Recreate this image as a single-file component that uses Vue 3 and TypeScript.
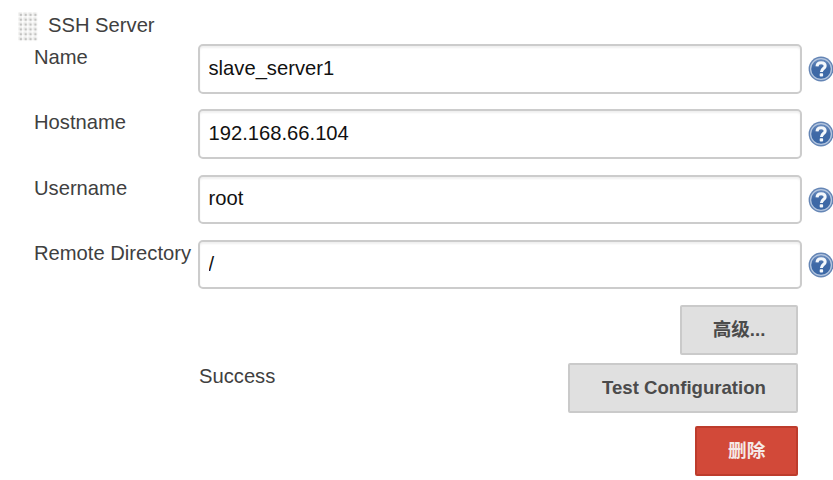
<script setup lang="ts">
import { reactive } from 'vue'

interface Field {
  id: string
  label: string
  value: string
}

const fields = reactive<Field[]>([
  { id: 'name', label: 'Name', value: 'slave_server1' },
  { id: 'hostname', label: 'Hostname', value: '192.168.66.104' },
  { id: 'username', label: 'Username', value: 'root' },
  { id: 'directory', label: 'Remote Directory', value: '/' },
])
</script>

<template>
  <main class="panel">
    <header class="heading">
      <svg class="handle" width="20" height="30" viewBox="0 0 20 30">
        <defs>
          <pattern id="grip" width="4.85" height="4.85" patternUnits="userSpaceOnUse">
            <rect x="0.4" y="0.4" width="3.7" height="3.7" fill="#e9e9e8" />
            <rect x="1.9" y="1.9" width="2.1" height="2.1" fill="#c2c2c0" />
          </pattern>
        </defs>
        <rect width="19.4" height="29.1" fill="url(#grip)" />
      </svg>
      <span>SSH Server</span>
    </header>

    <div v-for="field in fields" :key="field.id" class="row">
      <label class="label" :for="field.id">{{ field.label }}</label>
      <input :id="field.id" v-model="field.value" class="input" type="text" spellcheck="false" />
      <svg class="help" width="26" height="26" viewBox="0 0 26 26">
        <defs>
          <linearGradient :id="`shade-${field.id}`" x1="0" y1="0" x2="0" y2="1">
            <stop offset="0" stop-color="#6f90c0" />
            <stop offset="0.45" stop-color="#3f69a6" />
            <stop offset="1" stop-color="#3b68a6" />
          </linearGradient>
        </defs>
        <circle cx="13" cy="13" r="12.4" fill="#6485b5" />
        <circle cx="13" cy="13" r="10.4" :fill="`url(#shade-${field.id})`" stroke="#b4c6df" stroke-width="1.3" />
        <path d="M9 10.4C9.2 7.7 10.8 6.7 13.1 6.7C15.7 6.7 17.2 7.9 17.2 9.9C17.2 12.5 13.4 12.6 13.4 15.9" fill="none" stroke="#f4f8fc" stroke-width="3" />
        <rect x="11.7" y="17.3" width="3.4" height="3.2" rx="0.8" fill="#f4f8fc" />
      </svg>
    </div>

    <div class="actions">
      <button class="button advanced" type="button">高级...</button>
    </div>
    <div class="actions test-row">
      <span class="status">Success</span>
      <button class="button test" type="button">Test Configuration</button>
    </div>
    <div class="actions delete-row">
      <button class="button danger" type="button">删除</button>
    </div>
  </main>
</template>

<style>
body {
  margin: 0;
  background: #fff;
  overflow: hidden;
}
</style>

<style scoped>
.panel {
  box-sizing: border-box;
  width: 833px;
  height: 480px;
  padding-top: 12px;
  overflow: hidden;
  color: #404040;
  font: 20.2px/24px "Liberation Sans", "Noto Sans CJK SC", sans-serif;
}

.heading {
  display: flex;
  gap: 10px;
  height: 32.2px;
  padding-left: 18px;
}

.heading span {
  padding-top: 1px;
}

.handle {
  flex: none;
}

.row {
  display: grid;
  grid-template-columns: 163.5px 604.5px 26px;
  height: 65.2px;
  padding-left: 34px;
}

.label {
  padding-top: 1px;
  white-space: nowrap;
}

.input {
  box-sizing: border-box;
  width: 604.5px;
  height: 49.6px;
  padding: 0 9px 1px;
  border: 2px solid #ccc;
  border-radius: 5px;
  outline: none;
  background: #fff;
  box-shadow: inset 0 2px 2px #f0f0f0;
  color: #111;
  font: inherit;
}

.help {
  margin: 12px 0 0 5.6px;
}

.actions {
  display: flex;
  justify-content: flex-end;
  padding-right: 35px;
}

.test-row {
  margin-top: 8px;
}

.delete-row {
  margin-top: 13px;
}

.status {
  margin: 1px auto 0 199px;
}

.button {
  box-sizing: border-box;
  height: 50px;
  padding: 0;
  border: 2px solid #cacaca;
  border-radius: 2px;
  background: #e0e0e0;
  color: #4b4b4b;
  font: bold 18.6px/24px "Liberation Sans", "Noto Sans CJK SC", sans-serif;
}

.advanced {
  width: 118px;
}

.test {
  width: 230px;
  padding-left: 2px;
}

.danger {
  width: 102.6px;
  border-color: #bd3c2c;
  background: #d24939;
  color: #f5e9e7;
}
</style>
